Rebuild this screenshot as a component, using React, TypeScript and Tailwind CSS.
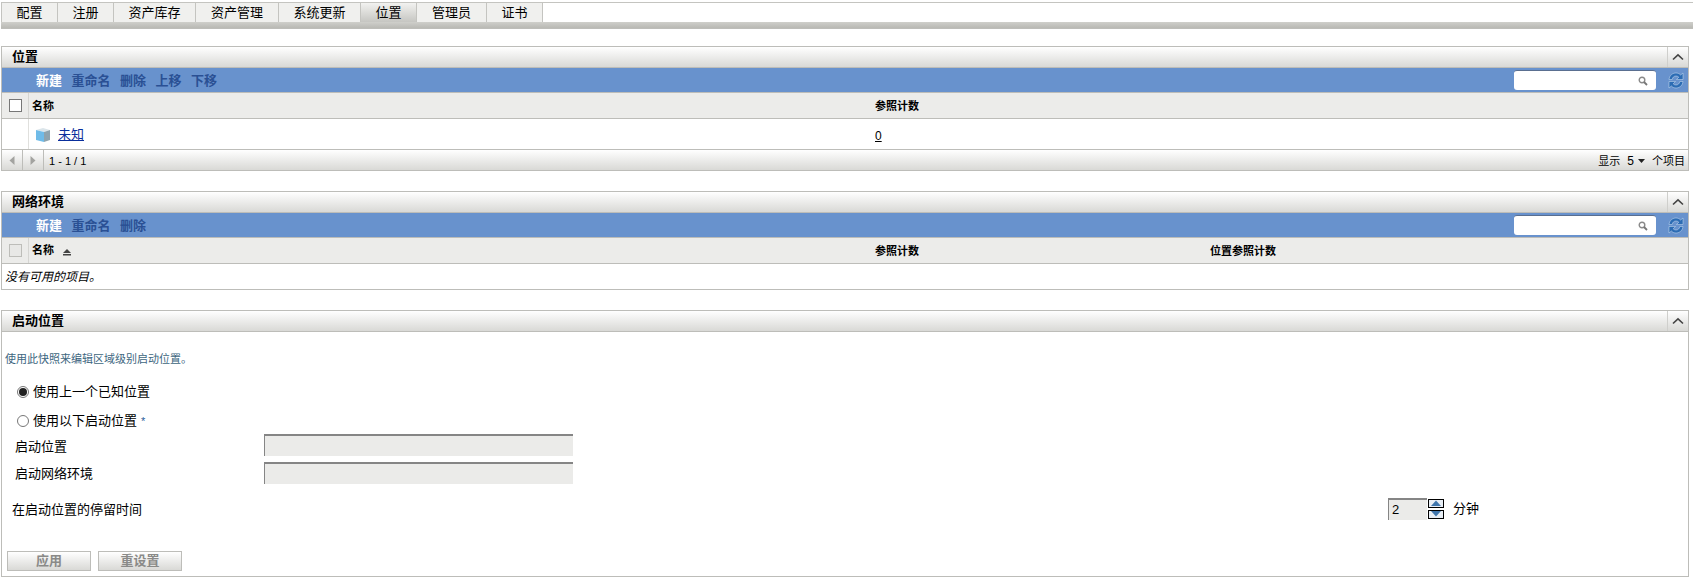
import React from 'react';

const font = { fontFamily: '"Liberation Sans", "Noto Sans CJK SC", sans-serif' };

const tabs = [
  { label: '配置', w: 'w-[57px]' },
  { label: '注册', w: 'w-[56px]' },
  { label: '资产库存', w: 'w-[82px]' },
  { label: '资产管理', w: 'w-[83px]' },
  { label: '系统更新', w: 'w-[82px]' },
  { label: '位置', w: 'w-[56px]', active: true },
  { label: '管理员', w: 'w-[70px]' },
  { label: '证书', w: 'w-[56px]' },
];

const Chevron = () => (
  <svg width="12" height="8" viewBox="0 0 12 8" fill="none">
    <path d="M1 6.5 L6 1.8 L11 6.5" stroke="#444" strokeWidth="1.6" />
  </svg>
);

const PanelHeader: React.FC<{ title: string }> = ({ title }) => (
  <div className="flex items-stretch h-[21px] bg-gradient-to-b from-white to-[#d9d9d6] border-b border-[#bdbdb9]">
    <div className="flex-1 pl-[10px] flex items-center text-[13px] font-bold text-black">{title}</div>
    <div className="w-[21px] border-l border-[#cfcfcc] flex items-center justify-center">
      <Chevron />
    </div>
  </div>
);

const SearchIcon = () => (
  <svg width="10" height="10" viewBox="0 0 10 10" fill="none">
    <circle cx="4" cy="4" r="2.8" stroke="#8a8a8a" strokeWidth="1.4" />
    <path d="M6 6 L9 9" stroke="#777" strokeWidth="1.8" />
  </svg>
);

const RefreshIcon = () => (
  <svg width="16" height="17" viewBox="0 0 16 17" fill="none">
    <path d="M1 7.5 C1.5 3 5 1 8 1 C10 1 11.5 1.8 12.6 3 L15 1 V7.5 H8.5 L10.8 5.2 C10 4.4 9 4 8 4 C6 4 4.5 5.4 4.2 7.5 Z" fill="#2c6cb4" stroke="#cfe0f2" strokeWidth="0.5" />
    <path d="M15 9.5 C14.5 14 11 16 8 16 C6 16 4.5 15.2 3.4 14 L1 16 V9.5 H7.5 L5.2 11.8 C6 12.6 7 13 8 13 C10 13 11.5 11.6 11.8 9.5 Z" fill="#2c6cb4" stroke="#cfe0f2" strokeWidth="0.5" />
  </svg>
);

const Toolbar: React.FC<{ items: string[] }> = ({ items }) => (
  <div className="flex items-center h-[25px] bg-[#6892cd] border-b border-[#bdbdb9]">
    <div className="flex items-center gap-[9.5px] pl-[34px] pt-[1px] text-[13px] font-bold text-[#2a5094]">
      {items.map((item, i) => (
        <span key={item} className={i === 0 ? 'text-white' : ''}>{item}</span>
      ))}
    </div>
    <div className="ml-auto flex items-center">
      <div className="w-[142px] h-[20px] bg-white rounded-[3px] border-t border-t-[#5a6f90] flex items-center justify-end pr-[8px]">
        <SearchIcon />
      </div>
      <div className="ml-[12px] mr-[4px] flex items-center">
        <RefreshIcon />
      </div>
    </div>
  </div>
);

const CubeIcon = () => (
  <svg width="16" height="16" viewBox="0 0 16 16">
    <path d="M1 3 L8 1 L15 3 L9 5 Z" fill="#dbe5ea" />
    <path d="M1 3 L9 5 V15 L1 13 Z" fill="#6fbbe8" />
    <path d="M9 5 L15 3 V13 L9 15 Z" fill="#8fa3ad" />
  </svg>
);

const ArrowLeft = () => (
  <svg width="6" height="9" viewBox="0 0 6 9"><path d="M5.5 0 V9 L0.5 4.5 Z" fill="#a3a3a0" /></svg>
);
const ArrowRight = () => (
  <svg width="6" height="9" viewBox="0 0 6 9"><path d="M0.5 0 V9 L5.5 4.5 Z" fill="#a3a3a0" /></svg>
);

const Section: React.FC<{ children: React.ReactNode; className?: string }> = ({ children, className = '' }) => (
  <section className={`ml-[1px] mr-[4px] border border-[#bdbdb9] ${className}`}>{children}</section>
);

const Radio: React.FC<{ checked?: boolean }> = ({ checked }) => (
  <span className="w-[12px] h-[12px] rounded-full border border-[#777] bg-white flex items-center justify-center shrink-0">
    {checked && <span className="w-[8px] h-[8px] rounded-full bg-[#222]" />}
  </span>
);

const DisabledInput = () => (
  <div className="w-[309px] h-[22px] bg-[#ebebe9] border-t-2 border-l border-t-[#858585] border-l-[#858585]" />
);

const SpinButton: React.FC<{ up?: boolean }> = ({ up }) => (
  <div className="w-[16px] h-[9px] border border-black bg-[#e8eef5] flex items-center justify-center">
    <svg width="12" height="6" viewBox="0 0 12 6">
      <path d={up ? 'M1 6 L6 0.5 L11 6 Z' : 'M1 0 L6 5.5 L11 0 Z'} fill="#3f76ad" />
    </svg>
  </div>
);

export default function App() {
  return (
    <div className="w-[1693px] h-[580px] bg-white overflow-hidden text-black" style={font}>
      {/* tabs */}
      <div className="pt-[2px]">
        <div className="flex ml-[1px] h-[20px] border-t border-[#c4c4c0]">
          {tabs.map((t) => (
            <div
              key={t.label}
              className={`${t.w} flex items-center justify-center text-[13px] border-r border-[#c4c4c0] first:border-l ${
                t.active ? 'bg-gradient-to-b from-[#f2f2f0] to-[#c6c6c2]' : 'bg-[#f0f0ee]'
              }`}
            >
              {t.label}
            </div>
          ))}
        </div>
        <div className="ml-[1px] h-[7px] bg-gradient-to-b from-[#cfcfcb] to-[#b9b9b4] border-b border-[#bdbdb9]" />
      </div>

      <div className="pt-[17px]">
        <Section>
          <PanelHeader title="位置" />
          <Toolbar items={['新建', '重命名', '删除', '上移', '下移']} />
          <div className="flex h-[26px] bg-[#ececea] border-b border-[#bdbdb9] text-[11px] font-bold">
            <div className="w-[27px] flex items-center justify-center border-r border-[#d5d5d2]">
              <span className="w-[13px] h-[13px] bg-white border border-[#777]" />
            </div>
            <div className="w-[846px] pl-[3px] pt-[2px] flex items-center">名称</div>
            <div className="flex items-center pt-[2px]">参照计数</div>
          </div>
          <div className="flex h-[31px] bg-white border-b border-[#bdbdb9] text-[13px]">
            <div className="w-[27px] border-r border-[#e0e0dd]" />
            <div className="w-[846px] pl-[6px] pt-[2px] flex items-center gap-[7px]">
              <CubeIcon />
              <span className="underline text-[#0a2f9c]">未知</span>
            </div>
            <div className="flex items-center pt-[3px] underline text-[12px]">0</div>
          </div>
          <div className="flex items-center h-[20px] bg-gradient-to-b from-white to-[#d9d9d6] text-[11px]">
            <div className="w-[21px] h-full flex items-center justify-center border-r border-[#bdbdb9]"><ArrowLeft /></div>
            <div className="w-[21px] h-full flex items-center justify-center border-r border-[#bdbdb9]"><ArrowRight /></div>
            <span className="pl-[5px] pt-[2px]">1 - 1 / 1</span>
            <div className="ml-auto flex items-center pr-[3px] pt-[2px] text-[11px]">
              <span>显示</span>
              <span className="ml-[7px] text-[12px]">5</span>
              <svg className="ml-[4px]" width="7" height="4" viewBox="0 0 7 4"><path d="M0 0 H7 L3.5 4 Z" fill="#222" /></svg>
              <span className="ml-[7px]">个项目</span>
            </div>
          </div>
        </Section>

        <Section className="mt-[20px]">
          <PanelHeader title="网络环境" />
          <Toolbar items={['新建', '重命名', '删除']} />
          <div className="flex h-[26px] bg-[#ececea] border-b border-[#bdbdb9] text-[11px] font-bold">
            <div className="w-[27px] flex items-center justify-center border-r border-[#d5d5d2]">
              <span className="w-[13px] h-[13px] bg-[#e8e8e6] border border-[#bdbdb9]" />
            </div>
            <div className="w-[846px] pl-[3px] flex items-center">
              名称
              <svg className="ml-[9px] mt-[3px]" width="8" height="7" viewBox="0 0 8 7">
                <path d="M4 0 L8 4 H0 Z M0 5 H8 V6.5 H0 Z" fill="#444" />
              </svg>
            </div>
            <div className="w-[335px] flex items-center pt-[2px]">参照计数</div>
            <div className="flex items-center pt-[2px]">位置参照计数</div>
          </div>
          <div className="h-[25px] pl-[3px] flex items-center text-[12px] italic">没有可用的项目。</div>
        </Section>

        <Section className="mt-[20px] h-[267px] flex flex-col">
          <PanelHeader title="启动位置" />
          <div className="pl-[3px] pt-[20px] text-[11px] text-[#3d6680] leading-[15px]">使用此快照来编辑区域级别启动位置。</div>
          <div className="pl-[15px] pt-[16px] flex items-center gap-[4px] text-[13px] leading-[18px]">
            <Radio checked />
            <span>使用上一个已知位置</span>
          </div>
          <div className="pl-[15px] pt-[11px] flex items-center gap-[4px] text-[13px] leading-[18px]">
            <Radio />
            <span>使用以下启动位置</span>
            <span className="text-[#2a5c9a] text-[11px]">*</span>
          </div>
          <div className="flex flex-col gap-[5px] mt-[4px]">
            <div className="flex items-center text-[13px] pl-[13px]">
              <span className="w-[249px] pt-[3px]">启动位置</span>
              <DisabledInput />
            </div>
            <div className="flex items-center text-[13px] pl-[13px]">
              <span className="w-[249px] pt-[2px]">启动网络环境</span>
              <DisabledInput />
            </div>
          </div>
          <div className="flex items-center text-[13px] pl-[10px] mt-[14px]">
            <span className="w-[1376px] pt-[2px]">在启动位置的停留时间</span>
            <div className="w-[39px] h-[22px] bg-[#ebebe9] border-t-2 border-l border-t-[#858585] border-l-[#858585] pl-[3px] text-[13px] leading-[20px]">2</div>
            <div className="ml-[1px] flex flex-col gap-[2px]">
              <SpinButton up />
              <SpinButton />
            </div>
            <span className="ml-[9px]">分钟</span>
          </div>
          <div className="mt-auto flex gap-[7px] pl-[5px] pb-[5px]">
            <button className="w-[84px] h-[20px] border border-[#bdbdb9] bg-gradient-to-b from-white to-[#d9d9d6] text-[#8a8a88] text-[13px] font-bold flex items-center justify-center">应用</button>
            <button className="w-[84px] h-[20px] border border-[#bdbdb9] bg-gradient-to-b from-white to-[#d9d9d6] text-[#8a8a88] text-[13px] font-bold flex items-center justify-center">重设置</button>
          </div>
        </Section>
      </div>
    </div>
  );
}
